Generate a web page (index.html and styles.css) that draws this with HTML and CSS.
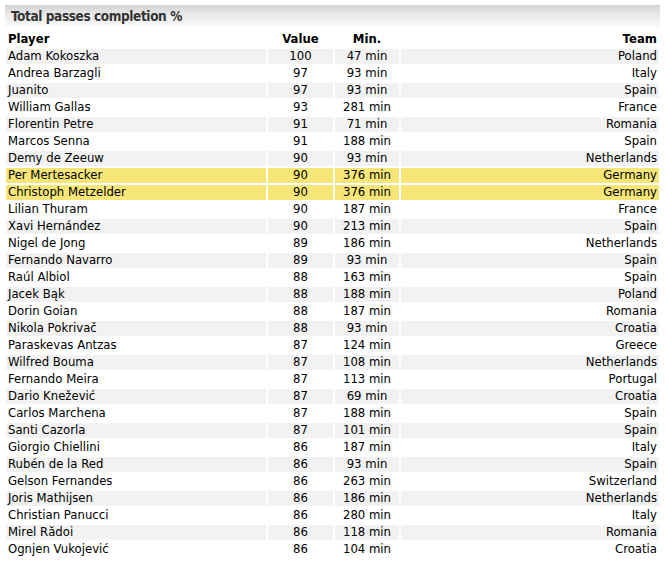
FILE: index.html
```html
<!DOCTYPE html>
<html>
<head>
<meta charset="utf-8">
<link rel="stylesheet" href="styles.css">
</head>
<body>
<div class="panel">
  <div class="title">Total passes completion %</div>
  <table class="stats">
    <colgroup>
      <col class="c-player"><col class="c-value"><col class="c-min"><col class="c-team">
    </colgroup>
    <thead>
      <tr><th class="player">Player</th><th class="num">Value</th><th class="num">Min.</th><th class="team">Team</th></tr>
    </thead>
    <tbody>
      <tr><td class="player">Adam Kokoszka</td><td class="num">100</td><td class="num">47 min</td><td class="team">Poland</td></tr>
      <tr><td class="player">Andrea Barzagli</td><td class="num">97</td><td class="num">93 min</td><td class="team">Italy</td></tr>
      <tr><td class="player">Juanito</td><td class="num">97</td><td class="num">93 min</td><td class="team">Spain</td></tr>
      <tr><td class="player">William Gallas</td><td class="num">93</td><td class="num">281 min</td><td class="team">France</td></tr>
      <tr><td class="player">Florentin Petre</td><td class="num">91</td><td class="num">71 min</td><td class="team">Romania</td></tr>
      <tr><td class="player">Marcos Senna</td><td class="num">91</td><td class="num">188 min</td><td class="team">Spain</td></tr>
      <tr><td class="player">Demy de Zeeuw</td><td class="num">90</td><td class="num">93 min</td><td class="team">Netherlands</td></tr>
      <tr class="hl"><td class="player">Per Mertesacker</td><td class="num">90</td><td class="num">376 min</td><td class="team">Germany</td></tr>
      <tr class="hl"><td class="player">Christoph Metzelder</td><td class="num">90</td><td class="num">376 min</td><td class="team">Germany</td></tr>
      <tr><td class="player">Lilian Thuram</td><td class="num">90</td><td class="num">187 min</td><td class="team">France</td></tr>
      <tr><td class="player">Xavi Hernández</td><td class="num">90</td><td class="num">213 min</td><td class="team">Spain</td></tr>
      <tr><td class="player">Nigel de Jong</td><td class="num">89</td><td class="num">186 min</td><td class="team">Netherlands</td></tr>
      <tr><td class="player">Fernando Navarro</td><td class="num">89</td><td class="num">93 min</td><td class="team">Spain</td></tr>
      <tr><td class="player">Raúl Albiol</td><td class="num">88</td><td class="num">163 min</td><td class="team">Spain</td></tr>
      <tr><td class="player">Jacek Bąk</td><td class="num">88</td><td class="num">188 min</td><td class="team">Poland</td></tr>
      <tr><td class="player">Dorin Goian</td><td class="num">88</td><td class="num">187 min</td><td class="team">Romania</td></tr>
      <tr><td class="player">Nikola Pokrivač</td><td class="num">88</td><td class="num">93 min</td><td class="team">Croatia</td></tr>
      <tr><td class="player">Paraskevas Antzas</td><td class="num">87</td><td class="num">124 min</td><td class="team">Greece</td></tr>
      <tr><td class="player">Wilfred Bouma</td><td class="num">87</td><td class="num">108 min</td><td class="team">Netherlands</td></tr>
      <tr><td class="player">Fernando Meira</td><td class="num">87</td><td class="num">113 min</td><td class="team">Portugal</td></tr>
      <tr><td class="player">Dario Knežević</td><td class="num">87</td><td class="num">69 min</td><td class="team">Croatia</td></tr>
      <tr><td class="player">Carlos Marchena</td><td class="num">87</td><td class="num">188 min</td><td class="team">Spain</td></tr>
      <tr><td class="player">Santi Cazorla</td><td class="num">87</td><td class="num">101 min</td><td class="team">Spain</td></tr>
      <tr><td class="player">Giorgio Chiellini</td><td class="num">86</td><td class="num">187 min</td><td class="team">Italy</td></tr>
      <tr><td class="player">Rubén de la Red</td><td class="num">86</td><td class="num">93 min</td><td class="team">Spain</td></tr>
      <tr><td class="player">Gelson Fernandes</td><td class="num">86</td><td class="num">263 min</td><td class="team">Switzerland</td></tr>
      <tr><td class="player">Joris Mathijsen</td><td class="num">86</td><td class="num">186 min</td><td class="team">Netherlands</td></tr>
      <tr><td class="player">Christian Panucci</td><td class="num">86</td><td class="num">280 min</td><td class="team">Italy</td></tr>
      <tr><td class="player">Mirel Rădoi</td><td class="num">86</td><td class="num">118 min</td><td class="team">Romania</td></tr>
      <tr><td class="player">Ognjen Vukojević</td><td class="num">86</td><td class="num">104 min</td><td class="team">Croatia</td></tr>
    </tbody>
  </table>
</div>
</body>
</html>
```
FILE: styles.css
```css
html, body {
  margin: 0;
  padding: 0;
  background: #fff;
}
body {
  font-family: "DejaVu Sans", Verdana, sans-serif;
  color: #000;
}
.panel {
  padding: 5px 4px 0 4px;
}
.title {
  margin: 0 1px 0 1px;
  height: 22px;
  line-height: 22px;
  padding-left: 6px;
  font-family: "DejaVu Sans Condensed", "DejaVu Sans", sans-serif;
  font-size: 13.5px;
  letter-spacing: -0.4px;
  font-weight: bold;
  color: #333;
  background: linear-gradient(to bottom, #d2d2d2 0%, #e8e8e8 40%, #fbfbfb 100%);
}
.stats {
  margin-top: 3px;
  border-collapse: separate;
  border-spacing: 2px;
  table-layout: fixed;
  width: 657px;
  font-size: 11.7px;
}
.c-player { width: 260px; }
.c-value { width: 65px; }
.c-min { width: 64px; }
.c-team { width: 258px; }
.stats th, .stats td {
  height: 15px;
  line-height: 15px;
  padding: 0 2px;
  white-space: nowrap;
  overflow: hidden;
}
.stats th {
  font-weight: bold;
}
.stats tbody tr:nth-child(odd) td {
  background: #f2f2f2;
}
.stats tbody tr.hl td {
  background: #f6e678;
}
.player { text-align: left; }
.num { text-align: center; }
.team { text-align: right; }
```
